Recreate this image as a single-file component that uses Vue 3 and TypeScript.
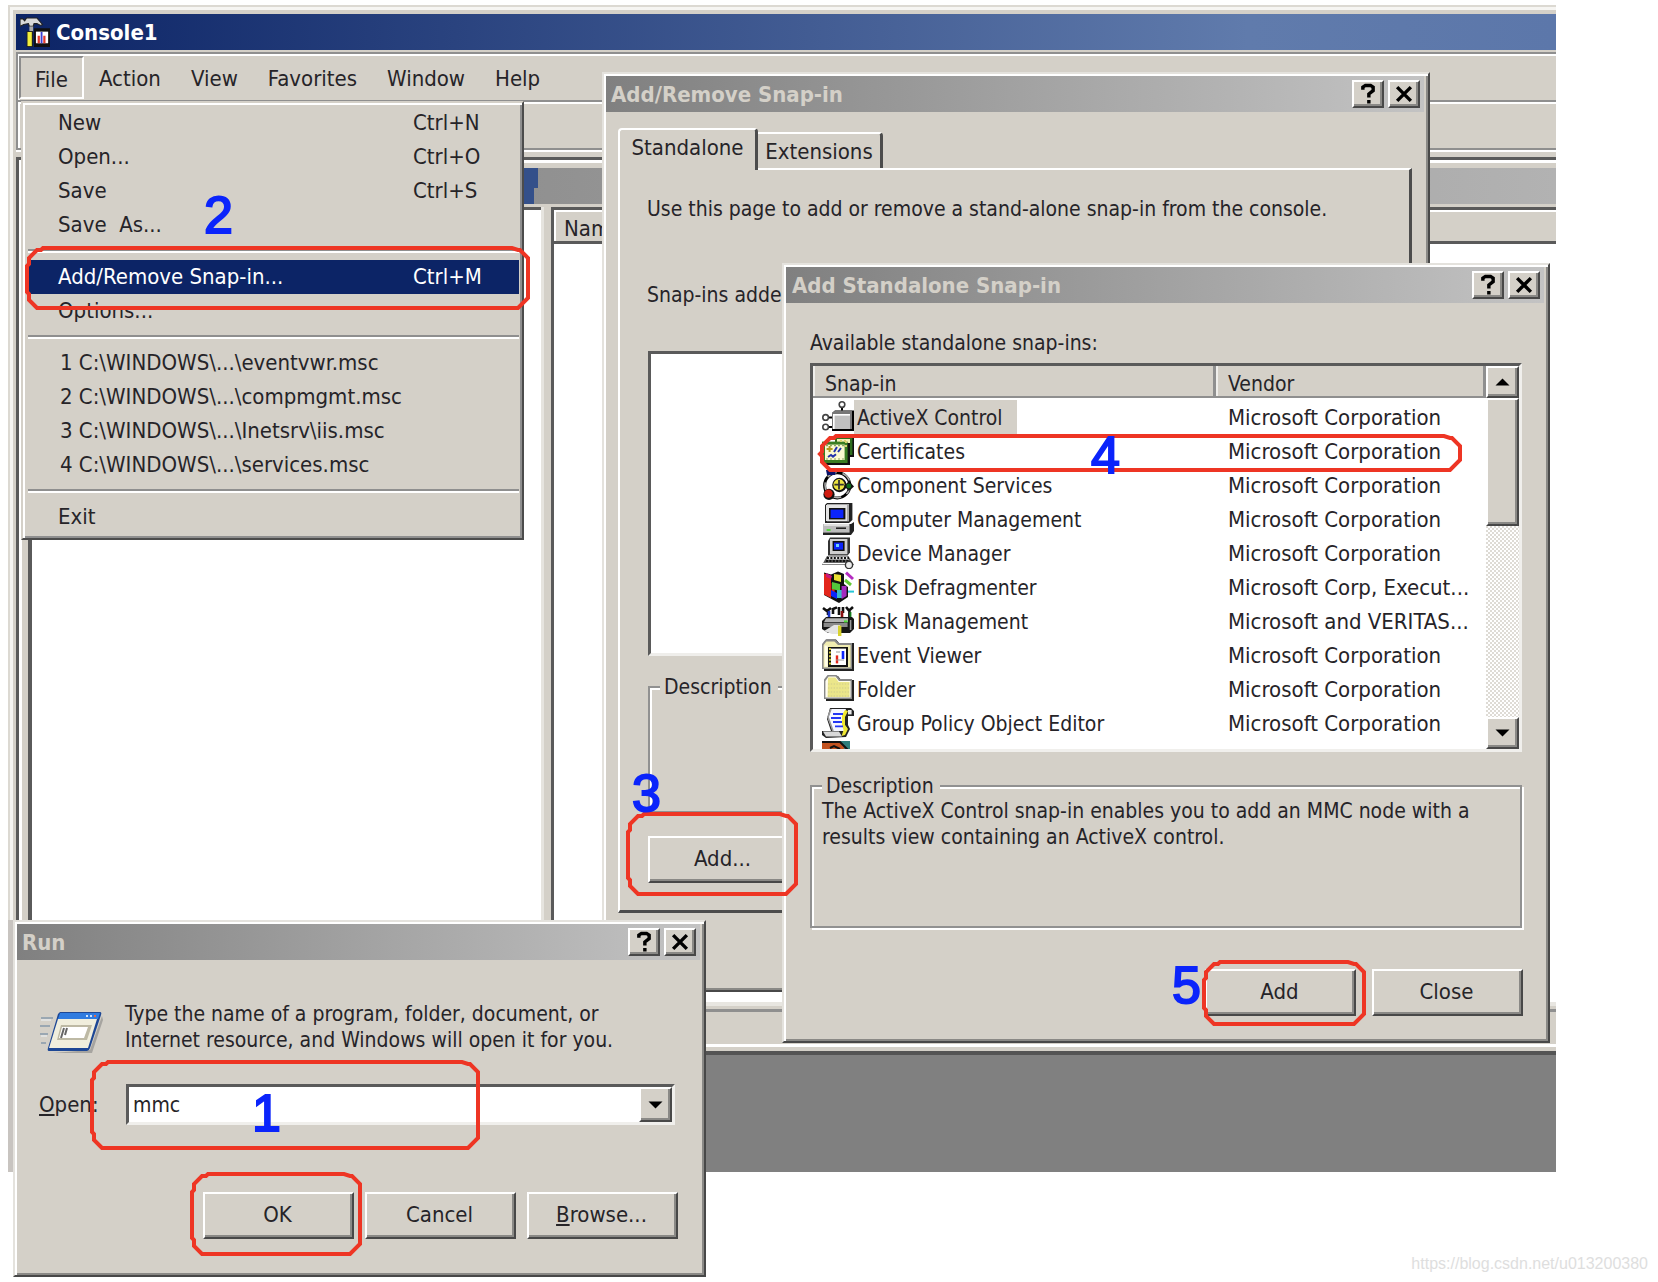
<script setup lang="ts">
import { ref } from 'vue'

interface MenuEntry {
  label?: string
  shortcut?: string
  separator?: boolean
  active?: boolean
  recent?: boolean
}

interface SnapIn {
  name: string
  vendor: string
  icon: string
}

interface Ring {
  x: number
  y: number
  w: number
  h: number
}

interface Step {
  n: string
  x: number
  y: number
}

const menus = ['File', 'Action', 'View', 'Favorites', 'Window', 'Help']

const fileMenu: MenuEntry[] = [
  { label: 'New', shortcut: 'Ctrl+N' },
  { label: 'Open...', shortcut: 'Ctrl+O' },
  { label: 'Save', shortcut: 'Ctrl+S' },
  { label: 'Save  As...' },
  { separator: true },
  { label: 'Add/Remove Snap-in...', shortcut: 'Ctrl+M', active: true },
  { label: 'Options...' },
  { separator: true },
  { label: '1 C:\\WINDOWS\\...\\eventvwr.msc', recent: true },
  { label: '2 C:\\WINDOWS\\...\\compmgmt.msc', recent: true },
  { label: '3 C:\\WINDOWS\\...\\Inetsrv\\iis.msc', recent: true },
  { label: '4 C:\\WINDOWS\\...\\services.msc', recent: true },
  { separator: true },
  { label: 'Exit' },
]

// Icon drawings on a 16 x 16 grid
const icons: Record<string, string> = {
  activex:
    '<path d="M10 3v2M3 8.2h2.500M3 13h2.500" stroke="#000" fill="none"/><circle cx="10" cy="1.800" r="1.400" fill="#fff" stroke="#444" stroke-width=".8"/><circle cx="1.800" cy="8.200" r="1.400" fill="#fff" stroke="#444" stroke-width=".8"/><circle cx="1.800" cy="13" r="1.400" fill="#fff" stroke="#444" stroke-width=".8"/><path d="M5 6l1.500-1.300H16V15H5z" fill="#000"/><path d="M5 6l1.500-1.300H15V14H5z" fill="#777"/><path d="M5.500 6.500H14V14H5.500z" fill="#fff"/><path d="M6.300 7.300H14V14H6.300z" fill="#c0c0c0"/>',
  cert:
    '<path d="M7 1h9v10H7z" fill="#111"/><path d="M6.500 1h8.700v9H6.500z" fill="#2f6e1e"/><path d="M7.500 2H14v6H7.500z" fill="#f4f1b8"/><path d="M1 4h13v11H1z" fill="#111"/><path d="M0 3.300h12.800V14H0z" fill="#3a7d22"/><path d="M1.500 4.800h9.800v7.700H1.500z" fill="#fbf9d0"/><path d="M3 11l1.500-1 1 .8 1.500-1.200M6 8.500L7.500 6M8 8.500L9.500 6.500" stroke="#2233aa" fill="none"/><path d="M2.300 7h3M3.800 5.500v3" stroke="#b09a20"/><path d="M2 5.300h9M2 12h9" stroke="#8aa860" stroke-width=".6" stroke-dasharray="1 1"/><path d="M12 3v3M9 3h3" stroke="#d8d070" stroke-dasharray="1 1"/>',
  component:
    '<circle cx="7.600" cy="8.200" r="6.300" fill="#fff" stroke="#000" stroke-width="1.500"/><circle cx="7.800" cy="8" r="6.300" fill="none" stroke="#aaa" stroke-width=".8" stroke-dasharray="5 3"/><circle cx="8.700" cy="8" r="3.600" fill="#111"/><circle cx="8.500" cy="7.800" r="2.800" fill="#ece440"/><path d="M8.500 5.500v4.700M6.200 7.800h4.700" stroke="#333" stroke-width=".9"/><circle cx="3.500" cy="12.700" r="2.800" fill="#111"/><circle cx="3.200" cy="12.300" r="2.100" fill="#d01c10"/><path d="M2 .5h5l-.5 2.500h-4z" fill="#0a1268"/><path d="M11 8.500l2.500-2.500L16 8.700 13.500 11z" fill="#111"/><circle cx="13.400" cy="8.500" r="1.200" fill="#0e6b1c"/>',
  computer:
    '<path d="M2.500 0h12.700v8.500L13.500 10H1.500V1z" fill="#222"/><path d="M2.500 .5h11v8.700h-11z" fill="#a9a9a9"/><path d="M2 1h10.500v8H2z" fill="#e4e4e4"/><path d="M3.500 2.500h8.200v5.700H3.500z" fill="#111"/><path d="M4.300 3.300h6.400v4.200H4.300z" fill="#0b24fb"/><path d="M.5 10.500h14L16 9.500v4.500L14.500 16H.5z" fill="#222"/><path d="M.5 10.500h13.300v4.300H.5z" fill="#bcbcbc"/><path d="M1 11h12.500" stroke="#eee" stroke-width=".7"/><path d="M2.300 13.500h2" stroke="#59d843"/><path d="M7 12.600h5" stroke="#222" stroke-width=".8"/>',
  device:
    '<path d="M4 .3h10v7.500l-1.200 1.500H3V2z" fill="#333"/><path d="M4 1h8.700v7.600H4z" fill="#cfcfcf"/><path d="M5.300 2h6v5h-6z" fill="#111"/><path d="M6 2.800h4.500v3.500H6z" fill="#0b24fb"/><path d="M7 3.500h1.500v1.500H7z" fill="#6fd0ff"/><path d="M2.500 9.500h10.700L16 14H0z" fill="#555"/><path d="M3 9.800h9.700l.8 1.400H2.300z" fill="#eee"/><path d="M2.500 10.500h11M2 12h12" stroke="#111" stroke-dasharray="1 .7"/><path d="M.5 13.300h12" stroke="#fff" stroke-width=".7"/><circle cx="13.500" cy="14" r="1.800" fill="#eee" stroke="#333" stroke-width=".7"/>',
  defrag:
    '<path d="M1 .8l3.500 1L8 .3l3 1.200v5l2 1.500v5L8.500 16 1 12z" fill="#111"/><path d="M1 1.200l3.500 1.300v11L1 11.800z" fill="#e3261b"/><path d="M2 1l3 1.500L4.500 4 2 3z" fill="#c8187e"/><path d="M4.800 6h1.500v5.500H4.800z" fill="#e3261b"/><path d="M6 1.500l3.500.5v3.500L6 4.500z" fill="#e8e034"/><path d="M5 5.500l4 1V10l-4-1z" fill="#53c73c"/><path d="M4.500 9.500L7.500 11v3l-3-1.500z" fill="#0b24fb"/><path d="M7.500 9.500h2.500v4H7.500z" fill="#3ab8c8"/><path d="M9.800 7.500h2.500v5l-2.500 1.500z" fill="#a32bc0"/><path d="M12 .8L15.500 4" stroke="#b42cc0" stroke-width="1.500"/><path d="M11.500 4.500l3 2.500" stroke="#63ca35" stroke-width="1.500"/><path d="M13 10.300h3" stroke="#26c6d6"/>',
  disk:
    '<path d="M.5 1.500L2.500 3 4.500 1.500M5.500 4.500V1.500M5.500 2l2-.8M8.500 1v4M10.500 1v3M12 1l1.500 1.800L15.500 1M13.700 2.500V6M3 3v2" stroke="#111" stroke-width="1.300" fill="none"/><path d="M3.500 3v3.500" stroke="#1a36c8" stroke-width="1.300"/><path d="M10 3v3" stroke="#8a1010" stroke-width="1.300"/><path d="M14.200 3.500v3" stroke="#167a1c"/><path d="M2 6h13l1 1v5l-2 2H3L0 12V8z" fill="#161616"/><path d="M2 6.600h11v2H1z" fill="#b5b5b5"/><path d="M.8 9h12v2H.8z" fill="#8a8a8a"/><path d="M1 13l5-3h3v4.500H5z" fill="#e4e4e4"/><path d="M8 10.300h1.700V15.500H8z" fill="#d8d22e"/><path d="M11 8.200h1.800" stroke="#4fdc3b"/><path d="M14.300 7.500v5" stroke="#999" stroke-width=".8"/>',
  event:
    '<path d="M1 3V1.500L2.200.3H7L8.500 2H16v14H1z" fill="#222"/><path d="M0 2.500L1.800.3h5L8.300 2H15v13H0z" fill="#888"/><path d="M.8 3l1.400-1.800h4L8 3h6.300v11.300H.8z" fill="#f0ecb0"/><path d="M1.300 3.300h1.500v10.500H1.300z" fill="#fffde8"/><path d="M3 4h10v10H3z" fill="#111"/><path d="M4.500 4.800H12V13H4.500z" fill="#fff"/><path d="M4 4.500v9" stroke="#cfc838" stroke-dasharray="1 .8"/><path d="M7.500 8.200v4" stroke="#e3261b" stroke-width="1.200"/><path d="M10.500 6v4" stroke="#0b24fb" stroke-width="1.300"/><path d="M7 6.500h2M7 10.500h4" stroke="#999" stroke-width=".5"/>',
  folder:
    '<path d="M2 3.500L3 1.500h5l1.500 2H16V14H2z" fill="#222"/><path d="M1 3.300L2.800 1h4.500L9 3h6v10H1z" fill="#888"/><path d="M1.700 4l1.600-2.300h3.500L8.500 4h5.800v8.300H1.700z" fill="#fffdf0"/><path d="M3 2.300h3.700l1.600 2.200h5.500v7.500H2.800z" fill="#ebe68a"/><path d="M3 5.500h11M3 7.500h11M3 9.500h11M3 11.500h11" stroke="#d9d58c" stroke-width=".7" stroke-dasharray=".7 .7"/>',
  policy:
    '<path d="M4 .5h10.500L16 2v2.500h-3V9l1 2-2 4-10 .5L0 14v-2h4.500L2.500 6z" fill="#222"/><path d="M4.500 1H12L11 4v4.500l1.500 2L11 12H5.500L3 6z" fill="#f4f6ff"/><path d="M4.500 1L3 5l2.500 7" fill="none" stroke="#999" stroke-width=".8"/><path d="M11.500 1.500l1.500.5-1.500 3v4l1.500 2-1.500 3-1.700.5 1-3L10 9V4z" fill="#efe733"/><path d="M.5 12.300h8l1.500 2.500H2z" fill="#d9d9d9"/><path d="M13 1.500h1.800v2.200H13z" fill="#e8e8e8"/><path d="M5.500 3.500h5M4.500 5.500h5M5.500 7.500h4.500M6.500 9.700h4" stroke="#2236f4" stroke-width=".9"/>',
  more:
    '<path d="M0 0h14V6H0z" fill="#2e7d7a"/><path d="M0 0h8l3 3v3H0z" fill="#c2521f"/><path d="M0 .5h9l4 4M4 3.500l2-1 3 1.500" stroke="#111" fill="none"/>',
}

const snapIns: SnapIn[] = [
  { name: 'ActiveX Control', vendor: 'Microsoft Corporation', icon: 'activex' },
  { name: 'Certificates', vendor: 'Microsoft Corporation', icon: 'cert' },
  { name: 'Component Services', vendor: 'Microsoft Corporation', icon: 'component' },
  { name: 'Computer Management', vendor: 'Microsoft Corporation', icon: 'computer' },
  { name: 'Device Manager', vendor: 'Microsoft Corporation', icon: 'device' },
  { name: 'Disk Defragmenter', vendor: 'Microsoft Corp, Execut...', icon: 'defrag' },
  { name: 'Disk Management', vendor: 'Microsoft and VERITAS...', icon: 'disk' },
  { name: 'Event Viewer', vendor: 'Microsoft Corporation', icon: 'event' },
  { name: 'Folder', vendor: 'Microsoft Corporation', icon: 'folder' },
  { name: 'Group Policy Object Editor', vendor: 'Microsoft Corporation', icon: 'policy' },
  { name: '', vendor: '', icon: 'more' },
]

const selected = ref(0)
const command = ref('mmc')

const rings: Ring[] = [
  { x: 27, y: 248, w: 501, h: 60 },
  { x: 820, y: 436, w: 640, h: 34 },
  { x: 628, y: 814, w: 168, h: 80 },
  { x: 1204, y: 962, w: 160, h: 62 },
  { x: 92, y: 1062, w: 386, h: 86 },
  { x: 192, y: 1174, w: 168, h: 80 },
]

const steps: Step[] = [
  { n: '1', x: 252, y: 1131 },
  { n: '2', x: 204, y: 233 },
  { n: '3', x: 632, y: 811 },
  { n: '4', x: 1091, y: 473 },
  { n: '5', x: 1172, y: 1003 },
]

// Marker outline: a rectangle with chamfered corners
function ringPath(r: Ring): string {
  const c = 10
  return `M${r.x + c + 6} ${r.y}H${r.x + r.w - c - 6}l6 2h2l8 8V${r.y + r.h - c}l-${c} ${c}H${r.x + c}l-8-8v-6l-2-2V${r.y + c + 8}l2-2v-6l8-8h4z`
}
</script>

<template>
  <main class="desktop">
    <section class="console">
      <header class="console-title">
        <svg class="app-icon" viewBox="0 0 16 16" aria-hidden="true">
          <path d="M0 1h1.500l1 1 1-1.500h5.500l3 3.500-1 .5L9 3.500H7.500L7 5H5l-.5-1.500L2 4 0 5z" fill="#d9d9d9" stroke="#222" stroke-width=".6" />
          <path d="M5 5h2v3H5z" fill="#aaa" />
          <path d="M3.500 7.500H7V16H3.500z" fill="#222" />
          <path d="M4 8h2.300v7.500H4z" fill="#f2ee3c" />
          <path d="M7.500 6H16v10H7.500z" fill="#111" />
          <path d="M8.500 7.800H15V14H8.500z" fill="#fff" />
          <path d="M10 10v4M13 10v4" stroke="#e33a2c" stroke-width="1.200" />
          <path d="M11.500 8v6" stroke="#3b3fd0" />
        </svg>
        <h1>Console1</h1>
      </header>

      <nav class="menubar">
        <button v-for="m in menus" :key="m" type="button" :class="{ open: m === 'File' }">{{ m }}</button>
      </nav>
      <div class="toolbar"></div>

      <div class="mdi">
        <div class="child">
          <div class="child-title"><span class="child-active"></span></div>
          <div class="panes">
            <div class="tree"></div>
            <div class="splitter"></div>
            <div class="results"><div class="results-head">Name</div></div>
          </div>
          <div class="status"></div>
        </div>
      </div>
    </section>

    <div class="file-menu" role="menu">
      <template v-for="(e, i) in fileMenu" :key="i">
        <hr v-if="e.separator" />
        <button v-else type="button" role="menuitem" :class="{ active: e.active, recent: e.recent }">
          <span>{{ e.label }}</span><span v-if="e.shortcut" class="shortcut">{{ e.shortcut }}</span>
        </button>
      </template>
    </div>

    <section class="win add-remove">
      <header class="titlebar">
        <h2>Add/Remove Snap-in</h2>
        <button type="button" class="cap" aria-label="Help"><svg viewBox="0 0 16 14"><path d="M5 4.500V3l1.500-1h3L11 3v2L8.500 7v2M8.500 10.500v2" /></svg></button>
        <button type="button" class="cap" aria-label="Close"><svg viewBox="0 0 16 14"><path d="M4 3l8 8M12 3l-8 8" /></svg></button>
      </header>
      <div class="ar-body">
        <div class="tabs" role="tablist">
          <button type="button" role="tab" aria-selected="true" class="tab current">Standalone</button>
          <button type="button" role="tab" aria-selected="false" class="tab">Extensions</button>
        </div>
        <div class="page">
          <p>Use this page to add or remove a stand-alone snap-in from the console.</p>
          <p class="added">Snap-ins adde</p>
          <div class="ar-list"></div>
          <fieldset class="ar-group"><legend>Description</legend></fieldset>
          <button type="button" class="btn">Add...</button>
        </div>
      </div>
    </section>

    <section class="win standalone">
      <header class="titlebar">
        <h2>Add Standalone Snap-in</h2>
        <button type="button" class="cap" aria-label="Help"><svg viewBox="0 0 16 14"><path d="M5 4.500V3l1.500-1h3L11 3v2L8.500 7v2M8.500 10.500v2" /></svg></button>
        <button type="button" class="cap" aria-label="Close"><svg viewBox="0 0 16 14"><path d="M4 3l8 8M12 3l-8 8" /></svg></button>
      </header>
      <div class="sa-body">
        <p id="available">Available standalone snap-ins:</p>
        <div class="listbox">
          <div class="viewport">
            <table aria-labelledby="available">
              <thead>
                <tr><th class="col-name">Snap-in</th><th>Vendor</th></tr>
              </thead>
              <tbody>
                <tr v-for="(s, i) in snapIns" :key="s.icon" @click="selected = i">
                  <td>
                    <div class="cell" :class="{ picked: selected === i }">
                      <svg viewBox="0 0 16 16" aria-hidden="true" v-html="icons[s.icon]"></svg><span>{{ s.name }}</span>
                    </div>
                  </td>
                  <td>{{ s.vendor }}</td>
                </tr>
              </tbody>
            </table>
          </div>
          <div class="scrollbar">
            <button type="button" class="arrow" aria-label="Scroll up"><svg viewBox="0 0 16 16"><path d="M4 10l4-4 4 4z" /></svg></button>
            <div class="thumb"></div>
            <div class="track"></div>
            <button type="button" class="arrow" aria-label="Scroll down"><svg viewBox="0 0 16 16"><path d="M4 6l4 4 4-4z" /></svg></button>
          </div>
        </div>
        <fieldset class="sa-group">
          <legend>Description</legend>
          <p>The ActiveX Control snap-in enables you to add an MMC node with a<br />results view containing an ActiveX control.</p>
        </fieldset>
        <div class="sa-actions">
          <button type="button" class="btn">Add</button>
          <button type="button" class="btn">Close</button>
        </div>
      </div>
    </section>

    <section class="win run">
      <header class="titlebar">
        <h2>Run</h2>
        <button type="button" class="cap" aria-label="Help"><svg viewBox="0 0 16 14"><path d="M5 4.500V3l1.500-1h3L11 3v2L8.500 7v2M8.500 10.500v2" /></svg></button>
        <button type="button" class="cap" aria-label="Close"><svg viewBox="0 0 16 14"><path d="M4 3l8 8M12 3l-8 8" /></svg></button>
      </header>
      <div class="run-body">
        <div class="intro">
          <svg class="run-icon" viewBox="0 0 66 48" aria-hidden="true">
            <path d="M14 45h39l11-33-1-4-12 34z" fill="#777" opacity=".5" />
            <path d="M2 10h12M1 18h10M1 26h8M2 35h5" stroke="#9aa7b2" stroke-width="2" />
            <path d="M2 12h10M2 28h6" stroke="#eef3f8" stroke-width="1" />
            <path d="M21 4h40q2 0 1 3L51 40q-1 3-3 3H10q-2 0-1-3L19 6z" fill="#1d4795" />
            <path d="M21 5h40l-2 6H19z" fill="#2f7be0" />
            <path d="M47 8h2M51 8h2" stroke="#cfe3ff" stroke-width="2" />
            <path d="M55 8h2" stroke="#e2674a" stroke-width="2" />
            <path d="M19 11h39L49 40H10z" fill="#f0eedd" />
            <path d="M22 17h31l-5 15H18z" fill="#bdb9a4" />
            <path d="M23 19h26l-4 11H20z" fill="#fff" />
            <path d="M22 30l3-10M26 27l2-7" stroke="#666" stroke-width="2" />
          </svg>
          <p>Type the name of a program, folder, document, or<br />Internet resource, and Windows will open it for you.</p>
        </div>
        <div class="open-row">
          <label for="cmd"><u>O</u>pen:</label>
          <div class="combo">
            <input id="cmd" v-model="command" type="text" />
            <button type="button" class="arrow" aria-label="Show history"><svg viewBox="0 0 16 16"><path d="M4 6l4 4 4-4z" /></svg></button>
          </div>
        </div>
        <div class="run-actions">
          <button type="button" class="btn">OK</button>
          <button type="button" class="btn">Cancel</button>
          <button type="button" class="btn"><u>B</u>rowse...</button>
        </div>
      </div>
    </section>

    <svg class="marks" aria-hidden="true">
      <path v-for="(r, i) in rings" :key="i" :d="ringPath(r)" />
      <text v-for="s in steps" :key="s.n" :x="s.x" :y="s.y">{{ s.n }}</text>
    </svg>

    <div class="watermark">https://blog.csdn.net/u013200380</div>
  </main>
</template>

<style>
body {
  margin: 0;
  background: #fff;
}
</style>

<style scoped>
* {
  box-sizing: border-box;
}

.desktop {
  position: relative;
  display: flex;
  flex-direction: column;
  min-height: 100vh;
  padding: 5px 102px 110px 8px;
  overflow: hidden;
  font: 22px/26px "DejaVu Sans Condensed", "Noto Sans", sans-serif;
  color: #262428;
}

h1,
h2 {
  margin: 0;
  font-size: 22px;
  line-height: 26px;
}

p {
  margin: 0;
  white-space: nowrap;
}

button {
  padding: 0;
  border: 0;
  background: #d4d0c8;
  font: inherit;
  color: inherit;
  white-space: pre;
}

/* Console window */
.console {
  flex: 1;
  display: flex;
  flex-direction: column;
  padding: 7px 0 0 6px;
  border: solid #dcd9d2;
  border-width: 2px 0 0 2px;
  background: #d4d0c8;
  box-shadow: inset 3px 3px #f6f5f2;
}

.console-title {
  display: flex;
  align-items: center;
  gap: 6px;
  height: 36px;
  padding-left: 4px;
  background: linear-gradient(90deg, #0c2466, #607bac 80%, #5c77aa);
  color: #fff;
}

.console-title h1 {
  padding-top: 2px;
}

.app-icon {
  width: 30px;
  height: 32px;
}

.menubar {
  display: flex;
  margin-top: 2px;
  height: 50px;
  border: solid #8f8f8f;
  border-width: 2px 0 2px 2px;
  box-shadow: inset 2px 2px #fff;
}

.menubar button {
  height: 44px;
  margin-top: 2px;
  padding: 2px 15px 0;
  background: none;
}

.menubar button.open {
  height: 43px;
  margin-left: 1px;
  padding: 5px 14px 0;
  border: 2px solid #fff;
  border-top-color: #8c8c8c;
  border-left-color: #8c8c8c;
}

.toolbar {
  height: 48px;
  border: solid #8f8f8f;
  border-width: 0 0 2px 2px;
  box-shadow: inset 2px 2px #fff, 0 2px #fff;
}

.mdi {
  flex: 1;
  display: flex;
  flex-direction: column;
  margin-top: 7px;
  padding-bottom: 117px;
  border: solid #5a5a5a;
  border-width: 3px 0 0 3px;
  background: #808080;
}

.child {
  flex: 1;
  display: flex;
  flex-direction: column;
  padding: 8px 0 0 9px;
  border-bottom: 4px solid #545454;
  background: #d4d0c8;
  box-shadow: inset 3px 3px #fff;
}

.child-title {
  height: 36px;
  background: linear-gradient(90deg, #808080, #b2b2b2);
}

.child-active {
  display: block;
  width: 510px;
  height: 36px;
  background: #34508a;
  clip-path: polygon(0 0, 100% 0, 100% 20px, 506px 20px, 506px 100%, 0 100%);
}

.panes {
  flex: 1;
  display: flex;
  margin-top: 3px;
}

.tree {
  width: 513px;
  border: solid #5a5a5a;
  border-width: 3px 0 0 4px;
  background: #fff;
}

.splitter {
  width: 10px;
  border-left: 3px solid #e6e4df;
}

.results {
  flex: 1;
  border: solid #5a5a5a;
  border-width: 3px 0 0 3px;
  background: #fff;
}

.results-head {
  height: 34px;
  padding: 6px 0 0 10px;
  border-bottom: 3px solid #5a5a5a;
  background: #d4d0c8;
  box-shadow: inset 2px 2px #fff;
}

.status {
  height: 49px;
  background: linear-gradient(#e8e6e1 0 4px, #d4d0c8 4px 7px, #8f8f8f 7px 10px, #d4d0c8 10px 42px, #fff 42px 45px, #d4d0c8 45px);
}

/* File menu */
.file-menu {
  position: absolute;
  left: 21px;
  top: 101px;
  width: 503px;
  padding: 3px 3px 4px 5px;
  border: 2px solid #4c4c4c;
  border-top-color: #d4d0c8;
  border-left-color: #d4d0c8;
  background: #d4d0c8;
  box-shadow: inset 2px 2px #fff, inset -2px -2px #8f8f8f;
}

.file-menu button {
  display: flex;
  width: 100%;
  height: 34px;
  padding-left: 30px;
  align-items: center;
  text-align: left;
}

.file-menu button.recent {
  padding-left: 32px;
}

.file-menu button span:first-child {
  flex: 1;
}

.file-menu .shortcut {
  width: 106px;
}

.file-menu .active {
  background: #0c2466;
  color: #fff;
}

.file-menu hr {
  height: 4px;
  margin: 7px 0;
  border: 0;
  background: linear-gradient(#8f8f8f 50%, #fff 50%);
}

/* Dialog windows */
.win {
  position: absolute;
  padding: 2px;
  border: 2px solid #484848;
  border-top-color: #e4e2dd;
  border-left-color: #e4e2dd;
  background: #d4d0c8;
  box-shadow: inset 2px 2px #fff, inset -2px -2px #8a8986;
  font-size: 21px;
}

.titlebar {
  display: flex;
  align-items: center;
  gap: 4px;
  height: 36px;
  margin-right: 2px;
  padding: 0 4px 0 5px;
  background: linear-gradient(90deg, #808080, #c3c3c3);
  color: #d4d0c8;
}

.titlebar h2 {
  flex: 1;
  padding-top: 2px;
}

.cap,
.arrow,
.thumb,
.btn {
  border: 2px solid #484848;
  border-top-color: #fff;
  border-left-color: #fff;
  background: #d4d0c8;
  box-shadow: inset -2px -2px #8a8986;
  color: #262428;
}

.cap {
  width: 32px;
  height: 28px;
}

.cap svg {
  display: block;
  width: 28px;
  height: 24px;
}

.cap path {
  fill: none;
  stroke: #000;
  stroke-width: 2;
}

.btn {
  width: 151px;
  height: 47px;
  padding: 0 2px 2px 0;
  font-size: 22px;
  text-align: center;
}

fieldset {
  margin: 0;
  padding: 0;
  border: 2px solid #919191;
  box-shadow: 2px 2px #fff, inset 2px 2px #fff;
}

legend {
  margin-left: 10px;
  padding: 0 6px 0 4px;
  background: #d4d0c8;
  line-height: 22px;
}

/* Add/Remove Snap-in */
.add-remove {
  left: 602px;
  top: 72px;
  width: 828px;
}

.ar-body {
  padding: 16px 14px 75px 12px;
}

.tabs {
  position: relative;
  display: flex;
  align-items: flex-start;
  height: 40px;
}

.tab {
  width: 125px;
  height: 36px;
  margin-top: 4px;
  padding-top: 2px;
  border: solid #fff;
  border-width: 2px 3px 0 0;
  border-right-color: #4c4c4c;
  border-radius: 0 4px 0 0;
  font-size: 22px;
}

.tab.current {
  width: 140px;
  height: 42px;
  margin-top: 0;
  padding: 0 0 4px;
  border-left-width: 2px;
  border-radius: 4px 4px 0 0;
}

.page {
  height: 745px;
  padding: 26px 0 0 27px;
  border: 2px solid #fff;
  border-right: 3px solid #4c4c4c;
  border-bottom: 3px solid #4c4c4c;
}

.added {
  margin-top: 60px;
}

.ar-list {
  height: 305px;
  margin: 43px 28px 0 1px;
  border: 3px solid #5a5a5a;
  border-bottom-color: #efeeeb;
  background: #fff;
}

.ar-group {
  height: 137px;
  margin: 20px 28px 23px 1px;
}

.page .btn {
  margin-left: 1px;
}

/* Add Standalone Snap-in */
.standalone {
  left: 782px;
  top: 263px;
  width: 768px;
}

.standalone .titlebar {
  padding-left: 6px;
}

.sa-body {
  padding: 27px 23px 23px 24px;
}

.listbox {
  display: flex;
  height: 389px;
  margin: 7px 1px 0 0;
  border: 3px solid #f0efec;
  border-top-color: #5a5a5a;
  border-left-color: #5a5a5a;
  background: #fff;
}

.viewport {
  flex: 1;
  overflow: hidden;
}

table {
  width: 100%;
  table-layout: fixed;
  border-spacing: 0;
}

th {
  height: 34px;
  padding: 3px 0 0 12px;
  border-bottom: 2px solid #fff;
  background: #d4d0c8;
  background-clip: padding-box;
  box-shadow: inset -3px 0 #8f8f8f, inset 0 -2px #8f8f8f, inset 2px 0 #efeeeb;
  font-weight: 400;
  text-align: left;
}

.col-name {
  width: 403px;
}

td {
  height: 34px;
  padding: 2px 0 0 12px;
  font-size: 22px;
  white-space: nowrap;
}

td:first-child {
  padding: 0 0 0 9px;
  font-size: 21px;
}

.cell {
  display: flex;
  align-items: center;
  height: 34px;
}

.cell svg {
  width: 32px;
  height: 32px;
}

.cell span {
  padding: 5px 14px 3px 3px;
}

.cell.picked span {
  background: #d4d0c8;
}

.scrollbar {
  display: flex;
  flex-direction: column;
  width: 33px;
}

.arrow {
  width: 33px;
  height: 32px;
}

.arrow svg {
  display: block;
  width: 29px;
  height: 28px;
}

.thumb {
  height: 128px;
}

.track {
  flex: 1;
  background: repeating-conic-gradient(#fff 0 25%, #dedbd5 0 50%) 0 0 / 4px 4px;
}

.sa-group {
  height: 153px;
  margin: 23px 1px 0 0;
}

.sa-group p {
  padding: 1px 0 0 10px;
}

.sa-actions {
  display: flex;
  justify-content: flex-end;
  gap: 16px;
  margin-top: 41px;
}

/* Run */
.run {
  left: 13px;
  top: 920px;
  width: 693px;
}

.run::before {
  content: "";
  position: absolute;
  left: -7px;
  top: -2px;
  width: 5px;
  height: 252px;
  background: #c8c4c0;
}

.run-body {
  padding: 41px 24px 34px 22px;
}

.intro {
  display: flex;
  gap: 20px;
}

.run-icon {
  width: 66px;
  height: 48px;
  margin-top: 7px;
}

.open-row {
  display: flex;
  align-items: center;
  margin: 28px 3px 0 0;
}

.open-row label {
  width: 87px;
  font-size: 22px;
}

.combo {
  flex: 1;
  display: flex;
  height: 41px;
  border: 3px solid #f0efec;
  border-top-color: #5a5a5a;
  border-left-color: #5a5a5a;
  background: #fff;
}

.combo input {
  flex: 1;
  min-width: 0;
  padding: 0 4px;
  border: 0;
  outline: 0;
  background: none;
  font: inherit;
  color: inherit;
}

.combo .arrow {
  height: 35px;
}

.run-actions {
  display: flex;
  justify-content: flex-end;
  gap: 11px;
  margin-top: 67px;
}

/* Step markers */
.marks {
  position: absolute;
  inset: 0;
  width: 100%;
  height: 100%;
  pointer-events: none;
}

.marks path {
  fill: none;
  stroke: #ee3524;
  stroke-width: 4;
}

.marks text {
  fill: #0b24fb;
  stroke: #0b24fb;
  stroke-width: 2;
  font: 52px "Liberation Sans", sans-serif;
}

.watermark {
  position: absolute;
  right: 10px;
  bottom: 5px;
  font: 16px/26px "Liberation Sans", sans-serif;
  color: #dedede;
}
</style>
